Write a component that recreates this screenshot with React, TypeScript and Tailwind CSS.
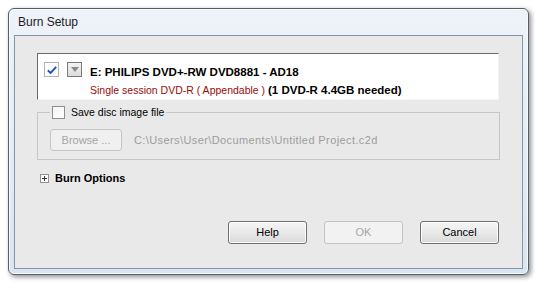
import type { ReactNode } from "react";

const ui = "font-['Liberation_Sans',Arial,sans-serif]";

function CheckBox({ checked = false }: { checked?: boolean }) {
  return (
    <span className="flex h-[13px] w-[13px] shrink-0 items-center justify-center border border-[#8f8f8f] bg-gradient-to-br from-[#f4f4f4] to-white">
      {checked ? (
        <svg width="9" height="8" viewBox="0 0 9 8">
          <path d="M0.8 4.2 L3.3 6.8 L8.2 0.8" fill="none" stroke="#1f4fb0" strokeWidth="1.8" />
        </svg>
      ) : null}
    </span>
  );
}

function DialogButton({ children, disabled = false }: { children: ReactNode; disabled?: boolean }) {
  return (
    <button
      type="button"
      disabled={disabled}
      className={
        disabled
          ? "flex h-[23px] w-[79px] items-center justify-center rounded-[3px] border border-[#c4c4c4] bg-[#f2f2f2] text-[11px] text-[#a6a6a6]"
          : "flex h-[23px] w-[79px] items-center justify-center rounded-[3px] border border-[#707070] bg-gradient-to-b from-[#f6f6f6] via-[#e9e9e9] to-[#d9d9d9] text-[11px] text-black shadow-[inset_0_0_0_1px_#fcfcfc]"
      }
    >
      {children}
    </button>
  );
}

export default function App() {
  return (
    <div className={`h-[282px] w-[535px] bg-white pl-[8px] pt-[8px] ${ui}`}>
      <div className="flex h-[267px] w-[521px] flex-col rounded-[6px] border border-[#555e6b] bg-gradient-to-b from-[#eef3f9] to-[#dae5f2] shadow-[2px_2px_5px_rgba(0,0,0,0.45),inset_0_0_0_1px_#f7fbff]">
        <div className="flex h-[26px] shrink-0 items-center pl-[9px] text-[12px] text-[#1b1b1b]">
          Burn Setup
        </div>
        <div className="mb-[5px] ml-[5px] mr-[5px] flex flex-1 flex-col border border-[#8594a6] bg-[#e9e9e9]">
          <div className="ml-[22px] mt-[17px] flex h-[47px] w-[462px] border-b border-l border-r border-t border-b-[#f4f4f4] border-l-[#6a6a6a] border-r-[#f4f4f4] border-t-[#6a6a6a] bg-white pl-[6px] pt-[8px]">
            <div className="flex items-start gap-[8px]">
              <span className="flex h-[15px] w-[15px] items-center justify-center border border-[#b2b2b2] bg-white">
                <svg width="10" height="8" viewBox="0 0 10 8">
                  <path d="M0.8 4.3 L3.6 7 L9.2 0.8" fill="none" stroke="#1e56b8" strokeWidth="1.9" />
                </svg>
              </span>
              <span className="flex h-[15px] w-[15px] items-center justify-center border border-[#7a7a7a] bg-gradient-to-b from-[#f3f3f3] to-[#dcdcdc]">
                <svg width="8" height="5" viewBox="0 0 8 5">
                  <path d="M0 0 H8 L4 5 Z" fill="#8a8a8a" />
                </svg>
              </span>
            </div>
            <div className="ml-[8px] flex flex-col pt-[1px] text-[11.5px] leading-[18px]">
              <span className="font-bold text-black">E: PHILIPS DVD+-RW DVD8881 - AD18</span>
              <span className="text-[10.5px] text-[#990b0b]">
                Single session DVD-R ( Appendable ){" "}
                <span className="text-[11.5px] font-bold text-black">(1 DVD-R 4.4GB needed)</span>
              </span>
            </div>
          </div>

          <fieldset className="ml-[22px] mt-[5px] w-[463px] border border-[#c6c6c6] pb-[8px] pl-[12px] pt-[8px]">
            <legend className="flex items-center gap-[6px] px-[2px] text-[10.5px] text-black">
              <CheckBox />
              Save disc image file
            </legend>
            <div className="flex items-center gap-[12px]">
              <button
                type="button"
                disabled
                className="flex h-[22px] w-[72px] items-center justify-center rounded-[3px] border border-[#c6c6c6] bg-[#f0f0f0] text-[11px] text-[#a4a4a4]"
              >
                Browse ...
              </button>
              <span className="text-[11px] tracking-[0.4px] text-[#9d9d9d]">
                C:\Users\User\Documents\Untitled Project.c2d
              </span>
            </div>
          </fieldset>

          <div className="ml-[25px] mt-[10px] flex items-center gap-[6px]">
            <span className="flex h-[9px] w-[9px] items-center justify-center border border-[#919191] bg-white">
              <svg width="5" height="5" viewBox="0 0 5 5">
                <path d="M0 2.5 H5 M2.5 0 V5" stroke="#333" strokeWidth="1" />
              </svg>
            </span>
            <span className="text-[11px] font-bold text-black">Burn Options</span>
          </div>

          <div className="mb-[24px] mt-auto flex justify-end gap-[17px] pr-[23px]">
            <DialogButton>Help</DialogButton>
            <DialogButton disabled>OK</DialogButton>
            <DialogButton>Cancel</DialogButton>
          </div>
        </div>
      </div>
    </div>
  );
}
